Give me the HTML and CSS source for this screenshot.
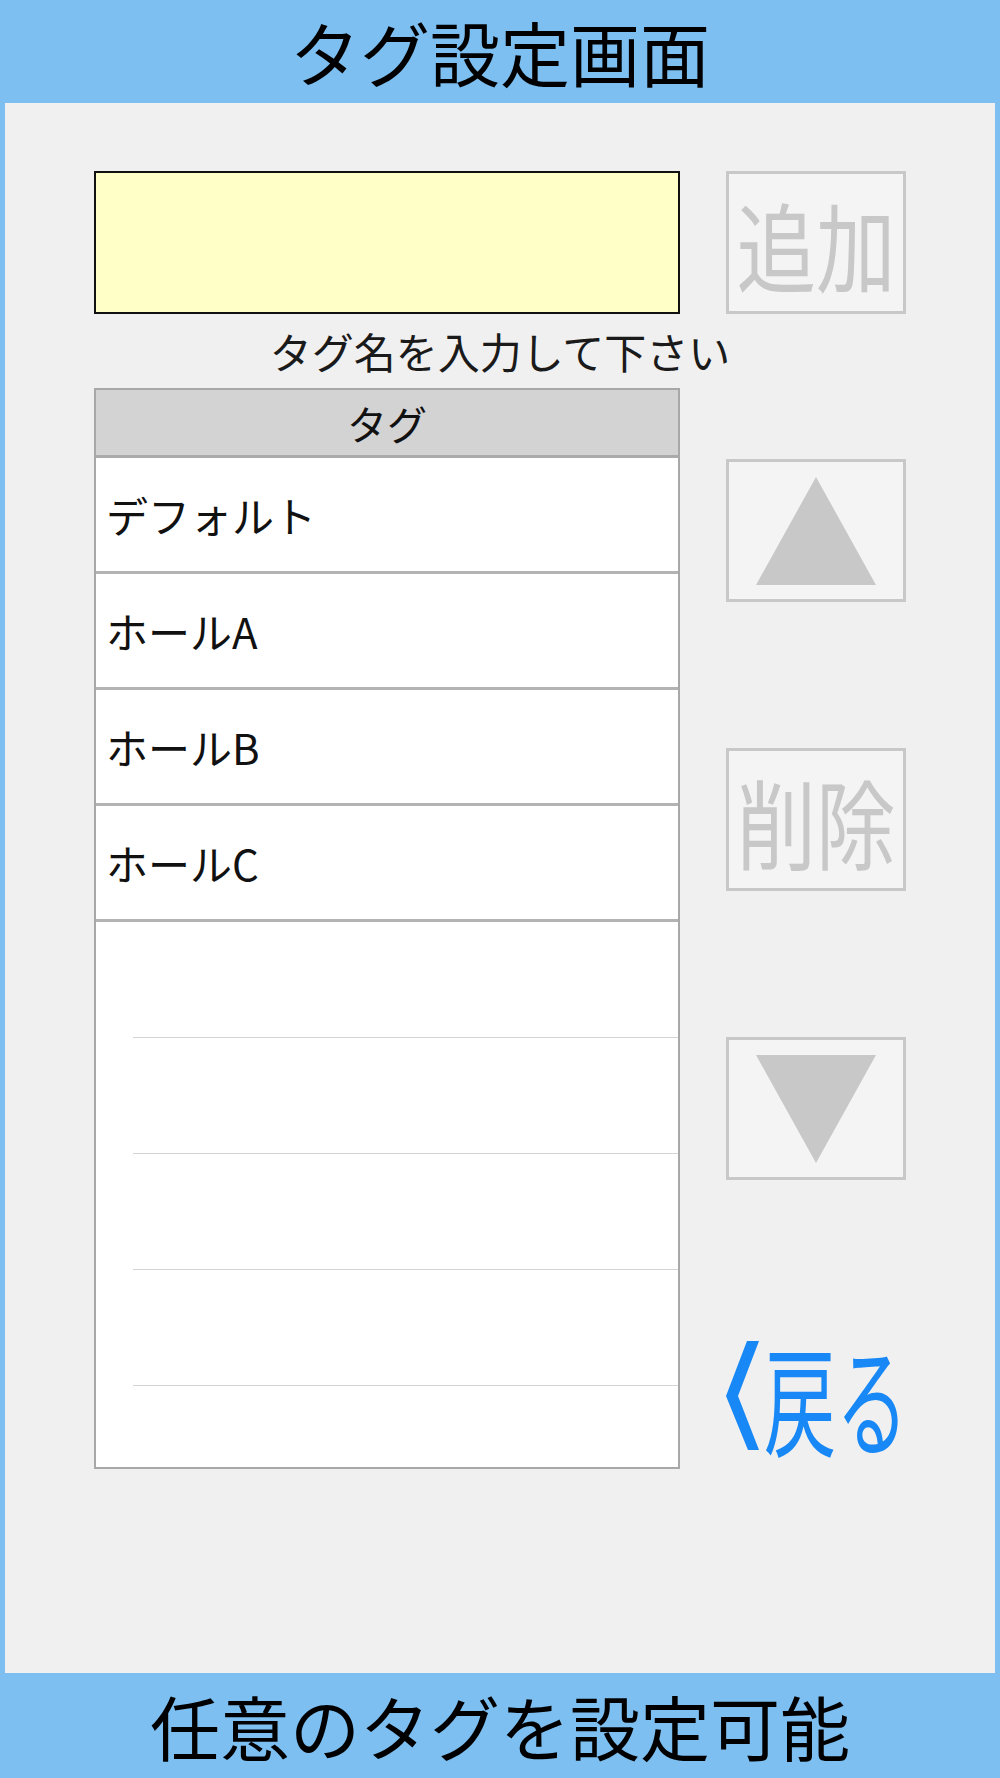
FILE: index.html
```html
<!DOCTYPE html>
<html lang="ja">
<head>
<meta charset="utf-8">
<title>タグ設定画面</title>
<link rel="stylesheet" href="styles.css">
</head>
<body>
<header class="bar bar-top">タグ設定画面</header>
<main class="panel">
  <div class="name-input"></div>
  <div class="btn btn-text"><span class="squeeze">追加</span></div>
  <div class="hint">タグ名を入力して下さい</div>
  <div class="table">
    <div class="thead">タグ</div>
    <div class="row">デフォルト</div>
    <div class="row">ホールA</div>
    <div class="row">ホールB</div>
    <div class="row">ホールC</div>
    <div class="empty"></div>
    <div class="empty"></div>
    <div class="empty"></div>
    <div class="empty"></div>
    <div class="empty last"></div>
  </div>
  <div class="side">
    <div class="btn btn-up">
      <svg width="120" height="108" viewBox="0 0 120 108"><polygon points="60,0 120,108 0,108" fill="#c8c8c8"/></svg>
    </div>
    <div class="btn btn-text"><span class="squeeze">削除</span></div>
    <div class="btn btn-down">
      <svg width="120" height="108" viewBox="0 0 120 108"><polygon points="0,0 120,0 60,108" fill="#c8c8c8"/></svg>
    </div>
    <div class="back">
      <svg class="chev" width="34" height="110" viewBox="0 0 34 110"><polygon points="21,0 33,0 12,55 33,109 22,109 0,55" fill="#1788f6"/></svg>
      <div class="back-text"><span class="back-squeeze">戻る</span></div>
    </div>
  </div>
</main>
<footer class="bar bar-bottom">任意のタグを設定可能</footer>
</body>
</html>
```
FILE: styles.css
```css
* { box-sizing: border-box; }
html, body { margin: 0; padding: 0; }
body {
  width: 1000px;
  height: 1778px;
  background: #7dbff1;
  font-family: "Noto Sans CJK JP", "Noto Sans", sans-serif;
  color: #111;
  overflow: hidden;
}
.bar {
  display: flex;
  align-items: center;
  justify-content: center;
  font-size: 70px;
  line-height: 1;
  color: #000;
}
.bar-top { height: 103px; }
.bar-bottom { height: 105px; }
.panel {
  margin: 0 5px;
  height: 1570px;
  background: #f0f0f0;
  padding: 68px 0 0 89px;
  display: grid;
  grid-template-columns: 586px 180px;
  grid-template-rows: 143px 74px auto;
  column-gap: 46px;
  align-items: start;
}
.name-input {
  height: 143px;
  border: 2px solid #111;
  background: #ffffc8;
}
.btn {
  width: 180px;
  height: 143px;
  border: 3px solid #c8c8c8;
  background: #f4f4f4;
  display: flex;
  align-items: center;
  justify-content: center;
  overflow: visible;
}
.btn-text { color: #c8c8c8; }
.squeeze {
  display: block;
  flex-shrink: 0;
  font-size: 97px;
  line-height: 1;
  transform: scaleX(0.82);
  white-space: nowrap;
}
.hint {
  grid-column: 1 / 3;
  height: 74px;
  display: flex;
  align-items: center;
  justify-content: center;
  font-size: 42px;
  line-height: 1;
  color: #1a1a1a;
}
.table {
  height: 1081px;
  border: 2px solid #a8a8a8;
  background: #fff;
  overflow: hidden;
}
.thead {
  height: 68px;
  background: #d3d3d3;
  border-bottom: 3px solid #aaa;
  display: flex;
  align-items: center;
  justify-content: center;
  font-size: 40px;
  line-height: 1;
  color: #111;
}
.row {
  height: 116px;
  border-bottom: 3px solid #b3b3b3;
  display: flex;
  align-items: center;
  padding-left: 10px;
  font-size: 42px;
  line-height: 1;
  color: #111;
}
.empty {
  height: 116px;
  margin-left: 37px;
  border-bottom: 1px solid #d4d4d4;
}
.empty.last { border-bottom: none; }
.side {
  display: flex;
  flex-direction: column;
}
.btn-up { margin-top: 71px; }
.side .btn-text { margin-top: 146px; }
.btn-down { margin-top: 146px; }
.back {
  margin-top: 160px;
  height: 112px;
  display: flex;
  align-items: center;
  color: #1788f6;
}
.chev { flex-shrink: 0; }
.back-text {
  width: 140px;
  margin-left: 4px;
  display: flex;
  align-items: center;
  overflow: visible;
}
.back-squeeze {
  display: block;
  flex-shrink: 0;
  font-size: 120px;
  line-height: 1;
  white-space: nowrap;
  transform: scaleX(0.6);
  transform-origin: left center;
}
```
